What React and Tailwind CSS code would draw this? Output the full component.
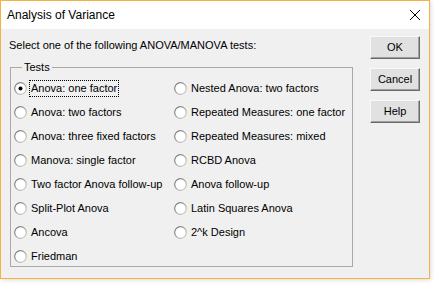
import React from 'react';

const leftTests = [
    'Anova: one factor',
    'Anova: two factors',
    'Anova: three fixed factors',
    'Manova: single factor',
    'Two factor Anova follow-up',
    'Split-Plot Anova',
    'Ancova',
    'Friedman',
];

const rightTests = [
    'Nested Anova: two factors',
    'Repeated Measures: one factor',
    'Repeated Measures: mixed',
    'RCBD Anova',
    'Anova follow-up',
    'Latin Squares Anova',
    '2^k Design',
];

const Radio = ({ checked }) => (
    <svg width="13" height="13" viewBox="0 0 13 13" className="shrink-0">
        <defs>
            <linearGradient id="rim" x1="0" y1="0" x2="1" y2="1">
                <stop offset="0" stopColor="#6f6f6f" />
                <stop offset="1" stopColor="#d8d8d8" />
            </linearGradient>
        </defs>
        <circle cx="6.5" cy="6.5" r="5.8" fill="#ffffff" stroke="url(#rim)" strokeWidth="1.2" />
        {checked && <circle cx="6.5" cy="6.5" r="2" fill="#000000" />}
    </svg>
);

const Option = ({ label, checked }) => (
    <div className="h-[24px] flex items-center">
        <Radio checked={checked} />
        <span
            className={`ml-[3px] px-[1px] leading-[15px] ${checked ? 'outline outline-1 outline-dotted outline-black' : ''}`}
        >
            {label}
        </span>
    </div>
);

const Button = ({ children }) => (
    <button className="w-[50px] h-[23px] bg-[#e1e1e1] border border-t-[#f8f8f8] border-l-[#f8f8f8] border-r-[#6a6a6a] border-b-[#6a6a6a] shadow-[inset_-1px_-1px_0_#a0a0a0] text-[11px] text-black">
        {children}
    </button>
);

export default function App() {
    return (
        <div className="w-[436px] h-[286px] bg-white" style={{ fontFamily: '"Liberation Sans", Arial, sans-serif' }}>
            <div className="w-[430px] h-[279px] border border-[#f2b244] bg-[#f0f0f0] flex flex-col shadow-[1px_1px_4px_rgba(0,0,0,0.15)]">
                {/* Title bar */}
                <div className="h-[28px] bg-white flex items-center justify-between pl-[6px] pr-[8px]">
                    <span className="text-[12px] text-black">Analysis of Variance</span>
                    <svg width="12" height="12" viewBox="0 0 12 12">
                        <path d="M1 1 L11 11 M11 1 L1 11" stroke="#000" strokeWidth="1" />
                    </svg>
                </div>

                {/* Body */}
                <div className="flex-1 flex justify-between text-[11px] text-black">
                    <div className="pl-[8px]">
                        <div className="pt-[8px] h-[38px]">Select one of the following ANOVA/MANOVA tests:</div>
                        <div className="relative ml-[1px] w-[343px] h-[200px] border border-[#a9a9a9]">
                            <span className="absolute left-[11px] -top-[8px] px-[2px] bg-[#f0f0f0] leading-[15px]">
                                Tests
                            </span>
                            <div className="flex pt-[8px] pl-[3px]">
                                <div className="w-[160px]">
                                    {leftTests.map((t, i) => (
                                        <Option key={t} label={t} checked={i === 0} />
                                    ))}
                                </div>
                                <div>
                                    {rightTests.map((t) => (
                                        <Option key={t} label={t} />
                                    ))}
                                </div>
                            </div>
                        </div>
                    </div>
                    <div className="flex flex-col gap-[9px] pt-[7px] pr-[9px]">
                        <Button>OK</Button>
                        <Button>Cancel</Button>
                        <Button>Help</Button>
                    </div>
                </div>
            </div>
        </div>
    );
}
